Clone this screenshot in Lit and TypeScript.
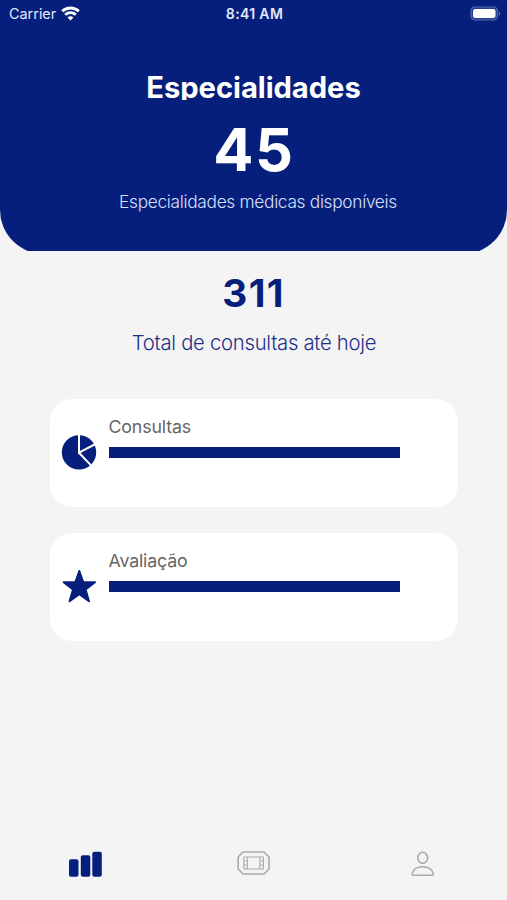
import { LitElement, html, css, svg } from "lit";
import { customElement, property } from "lit/decorators.js";

const pieIcon = svg`<svg width="36" height="36" viewBox="0 0 36 36">
  <circle cx="18" cy="18.4" r="17.2" fill="#071f7c"/>
  <path d="M18 0V18.7L34.5 10M18 18.7L30 31.4" fill="none" stroke="#fff" stroke-width="2"/>
</svg>`;

const starIcon = svg`<svg width="36" height="36" viewBox="0 0 36 36">
  <path d="M18.3 3L22.2 14.1L34 14.3L24.6 21.5L28 33.2L18.3 26.3L8.6 33.2L12 21.5L2.6 14.3L14.4 14.1Z" fill="#071f7c" stroke="#071f7c" stroke-width="2" stroke-linejoin="round"/>
</svg>`;

@customElement("stat-card")
class StatCard extends LitElement {
  @property() label = "";
  @property({ attribute: false }) icon: unknown;

  static styles = css`
    :host { display: flex; box-sizing: border-box; height: 107.5px; border-radius: 22px; background: #fff; padding: 17px 0 0 11px; }
    .icon { width: 36px; height: 36px; margin: 18px 11.5px 0 0; }
    .icon svg { display: block; }
    .label { font-size: 17.8px; line-height: 22px; letter-spacing: -0.16px; color: #656565; white-space: nowrap; }
    .bar { width: 291px; height: 11px; margin-top: 8.5px; background: #071f7c; }
  `;

  render() {
    return html`<div class="icon">${this.icon}</div>
      <div><div class="label">${this.label}</div><div class="bar"></div></div>`;
  }
}

@customElement("app-root")
class AppRoot extends LitElement {
  static styles = css`
    :host { display: flex; flex-direction: column; height: 900px; background: #f4f4f4; font-family: Inter, "Liberation Sans", sans-serif; overflow: hidden; color: #071f7c; }
    .clip { height: 251px; overflow: hidden; flex: none; }
    .header { height: 254px; border-radius: 0 0 44px 44px; background: #071f7c; color: #fff; text-align: center; }
    .status { display: grid; grid-template-columns: 1fr auto 1fr; align-items: center; height: 28px; padding: 0 6px 0 9px; font-size: 14.4px; line-height: 28px; color: #e2e8fa; }
    .carrier { display: flex; align-items: center; gap: 5px; }
    .carrier svg { margin-bottom: 2px; }
    .time { font-weight: 600; font-size: 14px; letter-spacing: 0.35px; margin-right: 1px; }
    .battery { justify-self: end; display: block; margin-bottom: 2px; }
    .title { margin: 46px 0 0; height: 26px; line-height: 27px; overflow: hidden; font-size: 29.2px; font-weight: 700; letter-spacing: -0.05px; }
    .count { margin-top: 19px; line-height: 60px; font-size: 59.5px; font-weight: 700; letter-spacing: 1.5px; padding-left: 1px; }
    .caption { margin-top: 12px; padding-left: 9px; line-height: 22px; font-size: 17.3px; font-weight: 300; letter-spacing: -0.3px; color: #d8e0ff; }
    .total { margin-top: 22px; line-height: 40px; font-size: 38.8px; font-weight: 700; letter-spacing: 1.3px; text-align: center; }
    .total-label { margin-top: 17px; padding-left: 1px; line-height: 25px; font-size: 20.3px; font-weight: 300; letter-spacing: -0.28px; text-align: center; color: #1c3188; }
    .cards { display: flex; flex-direction: column; gap: 26.5px; margin: 44.3px 49px 0 50px; }
    nav { display: flex; margin-top: auto; height: 54px; }
    nav div { flex: 1; display: flex; justify-content: center; }
    nav svg { display: block; }
  `;

  render() {
    return html`
      <div class="clip"><div class="header">
        <div class="status">
          <div class="carrier"><span>Carrier</span>
            <svg width="19" height="15" viewBox="0 0 19 15" fill="none" stroke="#fff" stroke-width="2.8">
              <path d="M1.2 5.3C5.8 .9 13.2 .9 17.8 5.3M4.2 8.8C7.2 6 11.8 6 14.8 8.8"/>
              <path d="M6.6 11.5C8.2 9.9 10.8 9.9 12.4 11.5L9.5 14.5Z" fill="#fff" stroke="none"/>
            </svg>
          </div>
          <div class="time">8:41 AM</div>
          <svg class="battery" width="31" height="15" viewBox="0 0 31 15">
            <rect x="1" y="1" width="26.5" height="13" rx="4" fill="#233a8e" stroke="#5568ac" stroke-width="1.2"/>
            <rect x="3" y="3" width="22.5" height="9" rx="2.2" fill="#fff"/>
            <path d="M29 5.2Q31.4 7.5 29 9.8Z" fill="#6275b4"/>
          </svg>
        </div>
        <h1 class="title">Especialidades</h1>
        <div class="count">45</div>
        <div class="caption">Especialidades médicas disponíveis</div>
      </div></div>
      <div class="total">311</div>
      <div class="total-label">Total de consultas até hoje</div>
      <div class="cards">
        <stat-card label="Consultas" .icon=${pieIcon}></stat-card>
        <stat-card label="Avaliação" .icon=${starIcon}></stat-card>
      </div>
      <nav>
        <div><svg width="36" height="34" viewBox="0 0 36 34" fill="#071f7c">
          <rect x="2" y="13.3" width="9.5" height="17.4" rx="2"/>
          <rect x="13.8" y="9.3" width="9.5" height="21.4" rx="2"/>
          <rect x="25.3" y="5.8" width="9.5" height="24.9" rx="2"/>
        </svg></div>
        <div><svg width="36" height="34" viewBox="0 0 36 34" fill="none" stroke="#aaa" stroke-width="1.6">
          <path d="M7 6H28L33 11V23L28 28H7L2.2 23V11Z"/>
          <g stroke-width="1.1"><path d="M7.8 11H27.4V23H7.8ZM11.3 11V23M23.9 11V23M7.8 15H11.3M7.8 19H11.3M23.9 15H27.4M23.9 19H27.4"/></g>
        </svg></div>
        <div><svg width="36" height="34" viewBox="0 0 36 34" fill="none" stroke="#aaa" stroke-width="1.6">
          <ellipse cx="17.7" cy="11.8" rx="4.9" ry="5.5"/>
          <path d="M8.1 29.3Q6.9 29.3 7.1 27.8C8.1 23.2 12.5 20.7 17.7 20.7S27.3 23.2 28.3 27.8Q28.5 29.3 27.3 29.3Z"/>
        </svg></div>
      </nav>`;
  }
}
